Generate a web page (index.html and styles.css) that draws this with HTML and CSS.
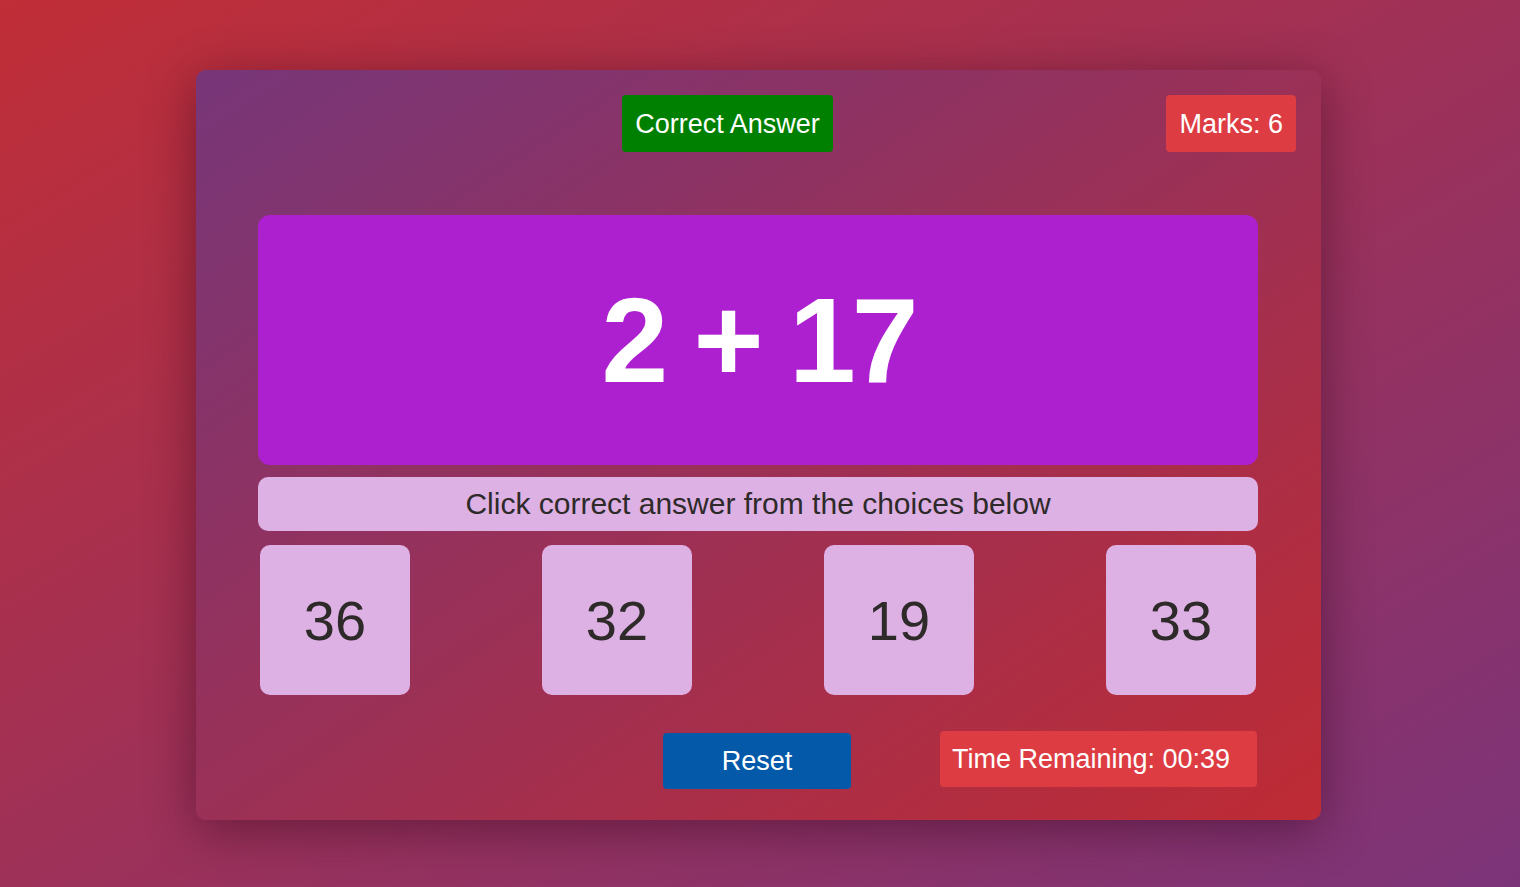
FILE: index.html
```html
<!DOCTYPE html>
<html lang="en">
<head>
<meta charset="utf-8">
<title>Math Quiz</title>
<link rel="stylesheet" href="styles.css">
</head>
<body>
  <div class="card">
    <div class="header">
      <div class="correct">Correct Answer</div>
      <div class="marks">Marks: 6</div>
    </div>
    <div class="main">
      <div class="question">2 + 17</div>
      <div class="instruction">Click correct answer from the choices below</div>
      <div class="choices">
        <div class="choice">36</div>
        <div class="choice">32</div>
        <div class="choice">19</div>
        <div class="choice">33</div>
      </div>
      <div class="footer">
        <div class="reset">Reset</div>
        <div class="timer">Time Remaining: 00:39</div>
      </div>
    </div>
  </div>
</body>
</html>
```
FILE: styles.css
```css
html, body {
  margin: 0;
  height: 100%;
}
body {
  box-sizing: border-box;
  padding: 70px 0 0 196px;
  background: linear-gradient(to bottom right, #c02e37, #7c3479);
  font-family: "Liberation Sans", Arial, sans-serif;
  overflow: hidden;
}
.card {
  box-sizing: border-box;
  width: 1125px;
  height: 750px;
  padding: 25px 25px 31px;
  border-radius: 10px;
  background: linear-gradient(to bottom right, #773679, #be2b34);
  box-shadow: 0 10px 50px rgba(40, 0, 20, 0.45);
}
.header {
  display: grid;
  grid-template-columns: 401px 211px 1fr auto;
  height: 57px;
}
.correct, .marks, .reset, .timer {
  display: flex;
  align-items: center;
  justify-content: center;
  color: #fff;
  font-size: 27px;
  border-radius: 4px;
  box-sizing: border-box;
}
.correct {
  grid-column: 2;
  background: #008000;
  padding-top: 1px;
}
.marks {
  grid-column: 4;
  background: #dd3c42;
  padding: 1px 13px 0;
}
.main {
  width: 1000px;
  margin: 63px 0 0 37px;
}
.question {
  height: 250px;
  border-radius: 12px;
  background: #ad20cf;
  color: #fff;
  font-weight: bold;
  font-size: 120px;
  letter-spacing: -4px;
  display: flex;
  align-items: center;
  justify-content: center;
}
.instruction {
  margin-top: 12px;
  height: 54px;
  border-radius: 10px;
  background: #ddb1e3;
  color: #2e2a2a;
  font-size: 30px;
  display: flex;
  align-items: center;
  justify-content: center;
}
.choices {
  margin-top: 14px;
  padding: 0 2px;
  display: flex;
  justify-content: space-between;
}
.choice {
  width: 150px;
  height: 150px;
  border-radius: 10px;
  background: #ddb1e3;
  color: #2e2a2a;
  font-size: 56px;
  display: flex;
  align-items: center;
  justify-content: center;
}
.footer {
  margin-top: 36px;
  display: grid;
  grid-template-columns: 405px 188px 1fr;
  align-items: start;
}
.reset {
  grid-column: 2;
  margin-top: 2px;
  height: 56px;
  background: #045aa9;
}
.timer {
  grid-column: 3;
  justify-self: end;
  justify-content: flex-start;
  padding: 0 12px;
  width: 317px;
  height: 56px;
  background: #dd3c42;
  margin-right: 1px;
}
```
